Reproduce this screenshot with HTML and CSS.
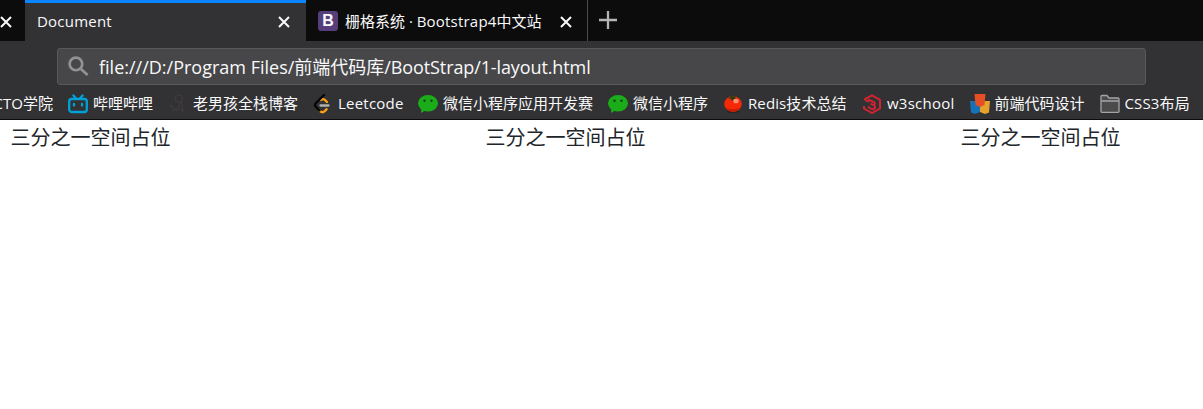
FILE: index.html
```html
<!DOCTYPE html>
<html lang="zh-CN">
<head>
<meta charset="utf-8">
<title>Document</title>
<link rel="stylesheet" href="styles.css">
</head>
<body>
<header class="browser">
  <div class="tabs">
    <div class="tab tab-prev"><svg class="close" viewBox="0 0 12 12"><path d="M1 1l10 10M11 1L1 11"/></svg></div>
    <div class="tab tab-active"><span class="tab-title latin-title">Document</span><svg class="close" viewBox="0 0 12 12"><path d="M1 1l10 10M11 1L1 11"/></svg></div>
    <div class="tab tab-next"><span class="bootstrap">B</span><span class="tab-title">栅格系统 · <span class="title-word">Bootstrap4</span>中文站</span><svg class="close" viewBox="0 0 12 12"><path d="M1 1l10 10M11 1L1 11"/></svg></div>
    <svg class="plus" viewBox="0 0 18 18"><path d="M9 0v18M0 9h18"/></svg>
  </div>
  <div class="toolbar">
    <div class="address">
      <svg class="search" viewBox="0 0 22 22"><circle cx="8.3" cy="8.3" r="6.6"/><path d="M13 13l7.5 7"/></svg>
      <span class="url">file:///D:/Program Files/前端代码库<span class="url-end">/BootStrap/1-layout.html</span></span>
    </div>
  </div>
  <nav class="bookmarks">
    <div class="mark"><span class="label w-cut">CTO学院</span></div>
    <div class="mark">
      <svg class="icon" viewBox="0 0 20 20" fill="none" stroke="#00a1d6" stroke-width="2.3" stroke-linecap="round"><rect x="1.2" y="5" width="17.6" height="13" rx="2.500"/><path d="M5.500 1.500l2.500 3M14.500 1.500l-2.500 3M6 10v1.500M14 10v1.500"/></svg>
      <span class="label w60">哔哩哔哩</span>
    </div>
    <div class="mark">
      <svg class="icon" viewBox="0 0 20 20" fill="none" stroke="#433c3b" stroke-width="1.1"><circle cx="11" cy="4.500" r="3.500"/><path d="M2 11l7 6M4 16l2 1M13 7c2 4 1 8 2 11M12 8c0 4-2 6-3 7l5 1"/></svg>
      <span class="label w105">老男孩全栈博客</span>
    </div>
    <div class="mark">
      <svg class="icon" viewBox="0 0 20 20" fill="none" stroke-width="2.3" stroke-linecap="round"><path stroke="#ffa116" d="M8 6q2-1.800 4 0l2 2M6.500 16.500q2.800 3 5 .8l2.200-2.100"/><path stroke="#050505" d="M11 1L3 9q-2 2 0 4l3.500 3.500"/><path stroke="#b3b1b0" d="M7.500 11.500h8"/></svg>
      <span class="label w65 leet">Leetcode</span>
    </div>
    <div class="mark">
      <svg class="icon" viewBox="0 0 20 20"><path fill="#1aad19" d="M3.500 13L3 19l4-2.500z"/><ellipse cx="10" cy="9.300" rx="10" ry="8.300" fill="#1aad19"/><circle cx="6.500" cy="6.700" r="1.200" fill="#183f1b"/><circle cx="13.500" cy="6.700" r="1.200" fill="#183f1b"/></svg>
      <span class="label w150">微信小程序应用开发赛</span>
    </div>
    <div class="mark">
      <svg class="icon" viewBox="0 0 20 20"><path fill="#1aad19" d="M3.500 13L3 19l4-2.500z"/><ellipse cx="10" cy="9.300" rx="10" ry="8.300" fill="#1aad19"/><circle cx="6.500" cy="6.700" r="1.200" fill="#183f1b"/><circle cx="13.500" cy="6.700" r="1.200" fill="#183f1b"/></svg>
      <span class="label w75">微信小程序</span>
    </div>
    <div class="mark">
      <svg class="icon" viewBox="0 0 20 20"><ellipse cx="10" cy="17.500" rx="6" ry="1.500" fill="#252525"/><ellipse cx="10" cy="10" rx="8.800" ry="7.700" fill="#f52908"/><path d="M2 13c3 6.300 13 6.300 16 0-3 3-13 3-16 0z" fill="#c91e05"/><path d="M5 4l3-1V1l2 1.500L13 2l-1 2 2 1.500-3-.3L9 7 8 5z" fill="#293f13"/><ellipse cx="13" cy="7" rx="2.700" ry="2.300" fill="#ff9070"/></svg>
      <span class="label w99 redis">Redis技术总结</span>
    </div>
    <div class="mark">
      <svg class="icon" viewBox="0 0 20 20" fill="none" stroke="#cf2431" stroke-width="2"><path d="M3 5l7-3.700 8 4.500v8.700L10 19l-8-4.500V12M2 5l5 3"/><path d="M6 5.500l6 2.500q2 1.700-.5 3L8.500 9.800M11.500 11q3 2 .5 4-2 .8-6-2.200"/></svg>
      <span class="label w68 school">w3school</span>
    </div>
    <div class="mark">
      <svg class="icon" viewBox="0 0 20 20"><path fill="#1572b6" d="M0 7h10v11l-5 2-4-1.500z"/><path fill="#e5a32c" d="M10 7h10l-1 11.500-4 1.500-5-2z"/><path fill="#e44f26" d="M4.500 0h11l-1 11-4.500 2-4.500-2z"/></svg>
      <span class="label w90">前端代码设计</span>
    </div>
    <div class="mark">
      <svg class="icon" viewBox="0 0 20 20" fill="#4c4b4c" stroke="#a5a4a5" stroke-width="1.300"><path d="M1 17.500v-15q0-1 1-1h5l2 2.500h9q1 0 1 1v12.500q0 .8-1 .8H2q-1 0-1-.8zM1 7h18"/></svg>
      <span class="label w66 css">CSS3布局</span>
    </div>
  </nav>
</header>
<main class="row">
  <div class="col">三分之一空间占位</div>
  <div class="col">三分之一空间占位</div>
  <div class="col">三分之一空间占位</div>
</main>
</body>
</html>
```
FILE: styles.css
```css
* { box-sizing: border-box; }
body { margin: 0; overflow: hidden; background: #fff; font-family: "Open Sans", "Noto Sans CJK SC", sans-serif; }
svg { flex: none; display: block; }
.browser { height: 120px; background: #323234; border-bottom: 1px solid #0c0c0d; color: #f9f9fa; white-space: nowrap; }
.tabs { display: flex; height: 41px; background: #0c0c0d; }
.tab { display: flex; align-items: center; height: 41px; font-size: 15px; }
.close { width: 12px; height: 12px; fill: none; stroke: #f9f9fa; stroke-width: 2; margin: 2px 0 0 auto; }
.tab-prev { width: 25px; padding-right: 15px; }
.tab-active { width: 281px; padding: 0 16px 2px 12px; border-top: 3px solid #0a84ff; background: #323234; }
.tab-next { width: 282px; padding-left: 12px; padding-right: 15px; border-right: 1px solid #4b4b4d; }
.tab-title { line-height: 22px; }
.latin-title { letter-spacing: .22px; }
.title-word { letter-spacing: .2px; }
.bootstrap { width: 20px; height: 20px; margin: 1px 7px 0 0; border-radius: 3px; background: #563d7c; font: bold 16px/20px "Liberation Sans", sans-serif; text-align: center; }
.plus { width: 18px; height: 18px; margin: 11px 0 0 11px; fill: none; stroke: #b5b5b6; stroke-width: 2.300; }
.toolbar { height: 47px; padding: 7px 57px 0; }
.address { display: flex; align-items: center; height: 37px; padding-left: 10px; border: 1px solid #59595b; border-radius: 3px; background: #474749; font-size: 18px; }
.search { width: 21px; height: 21px; margin-right: 10px; fill: none; stroke: #929293; stroke-width: 2.800; }
.url { line-height: 28px; }
.url-end { letter-spacing: -.11px; }
.bookmarks { display: flex; gap: 15px; height: 31px; align-items: center; }
.mark { display: flex; align-items: center; flex: none; gap: 5px; height: 24px; }
.icon { width: 20px; height: 20px; }
.label { display: block; font-size: 15px; line-height: 22px; padding-bottom: 1px; }
.leet { letter-spacing: .22px; }
.school { letter-spacing: .25px; }
.redis { letter-spacing: .1px; }
.css { letter-spacing: .15px; }
.w-cut { display: flex; justify-content: flex-end; width: 53px; }
.w60 { width: 60px; }
.w65 { width: 65px; }
.w66 { width: 66px; }
.w68 { width: 67.500px; }
.w75 { width: 75px; }
.w90 { width: 90px; }
.w99 { width: 99px; }
.w105 { width: 105px; }
.w150 { width: 150px; }
.row { display: flex; padding-left: 10px; }
.col { flex: 0 0 475px; color: #212529; font-size: 20px; line-height: 30px; padding: 3px 0 0 .5px; }
.col:last-child { flex: 1 0 0; }
```
